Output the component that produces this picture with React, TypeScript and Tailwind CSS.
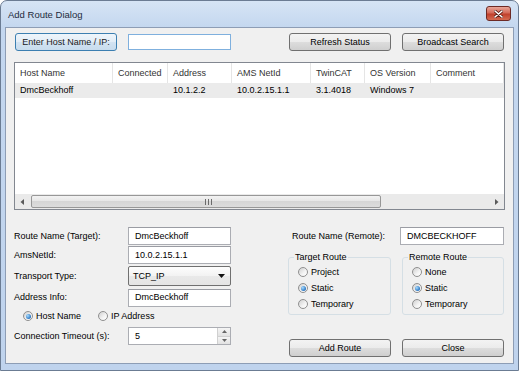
import React from "react";

const btnBg =
  "bg-[linear-gradient(#f3f3f3,#ebebeb_50%,#dddddd_50%,#cfcfcf)] border border-[#707070] rounded-[3px]";

function Btn({ children, className = "" }: { children: React.ReactNode; className?: string }) {
  return (
    <div className={`flex h-[18px] w-[102px] items-center justify-center ${btnBg} ${className}`}>
      {children}
    </div>
  );
}

function Input({ value = "", className = "" }: { value?: string; className?: string }) {
  return (
    <div
      className={`flex h-[18px] w-[103px] items-center border border-[#abadb3] border-t-[#9a9ca3] bg-white pl-[6px] ${className}`}
    >
      {value}
    </div>
  );
}

function Radio({ checked = false }: { checked?: boolean }) {
  return (
    <span className="flex h-[10px] w-[10px] shrink-0 items-center justify-center rounded-full border border-[#8f8f8f] bg-[linear-gradient(135deg,#cfcfcf,#f4f4f4_60%,#ffffff)]">
      {checked && (
        <span className="h-[5px] w-[5px] rounded-full bg-[radial-gradient(circle_at_35%_35%,#a8dcff,#2a76c2_70%,#1a4f8c)]" />
      )}
    </span>
  );
}

function RadioItem({ label, checked = false }: { label: string; checked?: boolean }) {
  return (
    <div className="flex h-[16px] items-center gap-[3px]">
      <Radio checked={checked} />
      <span>{label}</span>
    </div>
  );
}

const cols = [
  { name: "Host Name", w: 98 },
  { name: "Connected", w: 55 },
  { name: "Address", w: 64 },
  { name: "AMS NetId", w: 79 },
  { name: "TwinCAT", w: 54 },
  { name: "OS Version", w: 66 },
  { name: "Comment", w: 73 },
];
const row = ["DmcBeckhoff", "", "10.1.2.2", "10.0.2.15.1.1", "3.1.4018", "Windows 7", ""];

export default function App() {
  return (
    <div className="h-[371px] w-[519px] bg-white font-['Liberation_Sans',Arial,sans-serif] text-[9px] leading-none text-black">
      <div className="flex h-full w-full flex-col rounded-t-[7px] border border-[#6b7c93] bg-[linear-gradient(#d6e4f5,#c4d7ef_26px,#bfd3ed)] px-[4px] pb-[6px]">
        {/* title bar */}
        <div className="flex h-[26px] items-start justify-between">
          <span className="mt-[9px] pl-[3px] text-[9.5px] text-[#1e2b3c]">Add Route Dialog</span>
          <div className="mt-[5px] mr-[3px] flex h-[15px] w-[25px] items-center justify-center rounded-[3px] border border-[#6d2a25] bg-[linear-gradient(#e8a699,#d46a59_45%,#c0402c_55%,#d56b51)]">
            <svg width="9" height="8" viewBox="0 0 9 8">
              <path d="M1 1 L8 7 M8 1 L1 7" stroke="#5a1c14" strokeWidth="3" strokeLinecap="round" />
              <path d="M1 1 L8 7 M8 1 L1 7" stroke="#ffffff" strokeWidth="1.6" strokeLinecap="round" />
            </svg>
          </div>
        </div>

        {/* client area */}
        <div className="flex flex-1 flex-col border border-[#8d9db5] bg-[#f0f0f0] pl-[8px] pr-[8px]">
          {/* top row */}
          <div className="mt-[5px] flex items-start">
            <div className="ml-[1px] flex h-[18px] w-[102px] items-center justify-center rounded-[3px] border border-[#3c7fb1] bg-[linear-gradient(#eef5fb,#e2edf7_50%,#d3e3f2_50%,#c8dcee)] text-[#1a1a1a]">
              Enter Host Name / IP:
            </div>
            <div className="ml-[11px] mt-[1px] h-[16px] w-[103px] border border-[#7fb0de] bg-white" />
            <Btn className="ml-auto">Refresh Status</Btn>
            <Btn className="ml-[11px] mr-[1px]">Broadcast Search</Btn>
          </div>

          {/* list view */}
          <div className="mt-[11px] flex h-[148px] w-[491px] flex-col border border-[#828790] bg-white">
            <div className="flex h-[20px] items-center text-[#333]">
              {cols.map((c) => (
                <div
                  key={c.name}
                  style={{ width: c.w }}
                  className="flex h-full shrink-0 items-center border-r border-[#e5e5e5] pl-[5px]"
                >
                  {c.name}
                </div>
              ))}
            </div>
            <div className="flex h-[15px] items-center bg-[#ebebeb]">
              {cols.map((c, i) => (
                <div key={c.name} style={{ width: c.w }} className="shrink-0 pl-[5px]">
                  {row[i]}
                </div>
              ))}
            </div>
            <div className="flex-1" />
            {/* scrollbar */}
            <div className="flex h-[15px] items-center bg-[#eaeaea] px-[2px]">
              <svg width="12" height="12" viewBox="0 0 12 12" className="shrink-0">
                <path d="M7 3 L3.5 6 L7 9 Z" fill="#5a5a5a" />
              </svg>
              <div className="ml-[2px] flex h-[13px] w-[350px] items-center justify-center rounded-[2px] border border-[#979797] bg-[linear-gradient(#f3f3f3,#e5e5e5_50%,#d6d6d6_50%,#dcdcdc)]">
                <svg width="7" height="6" viewBox="0 0 7 6" className="ml-[4px]">
                  <path d="M0.5 0 V6 M3.5 0 V6 M6.5 0 V6" stroke="#6b6b6b" strokeWidth="1" />
                </svg>
              </div>
              <div className="flex-1" />
              <svg width="12" height="12" viewBox="0 0 12 12" className="shrink-0">
                <path d="M5 3 L8.5 6 L5 9 Z" fill="#5a5a5a" />
              </svg>
            </div>
          </div>

          {/* bottom section */}
          <div className="mt-[17px] flex">
            {/* left column */}
            <div className="flex w-[217px] flex-col">
              <div className="flex h-[18px] items-center">
                <span className="w-[114px]">Route Name (Target):</span>
                <Input value="DmcBeckhoff" />
              </div>
              <div className="mt-[1px] flex h-[18px] items-center">
                <span className="w-[114px]">AmsNetId:</span>
                <Input value="10.0.2.15.1.1" />
              </div>
              <div className="mt-[2px] flex h-[20px] items-center">
                <span className="w-[114px]">Transport Type:</span>
                <div className="flex h-[20px] w-[103px] items-center justify-between rounded-[2px] border border-[#707070] bg-[linear-gradient(#fdfdfd,#f2f2f2_50%,#e9e9e9_50%,#e4e4e4)] pl-[4px] pr-[5px]">
                  <span>TCP_IP</span>
                  <svg width="7" height="4" viewBox="0 0 7 4">
                    <path d="M0 0 H7 L3.5 4 Z" fill="#111" />
                  </svg>
                </div>
              </div>
              <div className="mt-[3px] flex h-[17px] items-center">
                <span className="w-[114px]">Address Info:</span>
                <Input value="DmcBeckhoff" className="h-[17px]" />
              </div>
              <div className="mt-[4px] flex h-[12px] items-center pl-[9px]">
                <RadioItem label="Host Name" checked />
                <div className="ml-[17px]">
                  <RadioItem label="IP Address" />
                </div>
              </div>
              <div className="mt-[5px] flex h-[18px] items-center">
                <span className="w-[114px]">Connection Timeout (s):</span>
                <div className="flex h-[18px] w-[103px] items-center border border-[#abadb3] bg-white pl-[6px]">
                  <span className="flex-1">5</span>
                  <div className="flex h-full w-[13px] flex-col border-l border-[#d0d0d0]">
                    <div className="flex flex-1 items-center justify-center border-b border-[#d0d0d0] bg-[linear-gradient(#f5f5f5,#e2e2e2)]">
                      <svg width="5" height="3" viewBox="0 0 5 3">
                        <path d="M0 3 H5 L2.5 0 Z" fill="#666" />
                      </svg>
                    </div>
                    <div className="flex flex-1 items-center justify-center bg-[linear-gradient(#f5f5f5,#e2e2e2)]">
                      <svg width="5" height="3" viewBox="0 0 5 3">
                        <path d="M0 0 H5 L2.5 3 Z" fill="#666" />
                      </svg>
                    </div>
                  </div>
                </div>
              </div>
            </div>

            {/* right column */}
            <div className="ml-[57px] flex w-[216px] flex-col">
              <div className="flex h-[18px] items-center">
                <span className="w-[112px] pl-[4px]">Route Name (Remote):</span>
                <Input value="DMCBECKHOFF" className="w-[104px]" />
              </div>
              <div className="mt-[8px] flex">
                <fieldset className="h-[62px] w-[103px] rounded-[3px] border border-[#d5dfe5] pl-[9px] pr-[2px]">
                  <legend className="ml-[-4px] px-[1px]">Target Route</legend>
                  <div className="mt-[2px] flex flex-col">
                    <RadioItem label="Project" />
                    <RadioItem label="Static" checked />
                    <RadioItem label="Temporary" />
                  </div>
                </fieldset>
                <fieldset className="ml-[11px] h-[62px] w-[102px] rounded-[3px] border border-[#d5dfe5] pl-[9px] pr-[2px]">
                  <legend className="ml-[-4px] px-[1px]">Remote Route</legend>
                  <div className="mt-[2px] flex flex-col">
                    <RadioItem label="None" />
                    <RadioItem label="Static" checked />
                    <RadioItem label="Temporary" />
                  </div>
                </fieldset>
              </div>
              <div className="mt-[24px] flex">
                <Btn className="ml-[1px]">Add Route</Btn>
                <Btn className="ml-[11px]">Close</Btn>
              </div>
            </div>
          </div>
        </div>
      </div>
    </div>
  );
}
